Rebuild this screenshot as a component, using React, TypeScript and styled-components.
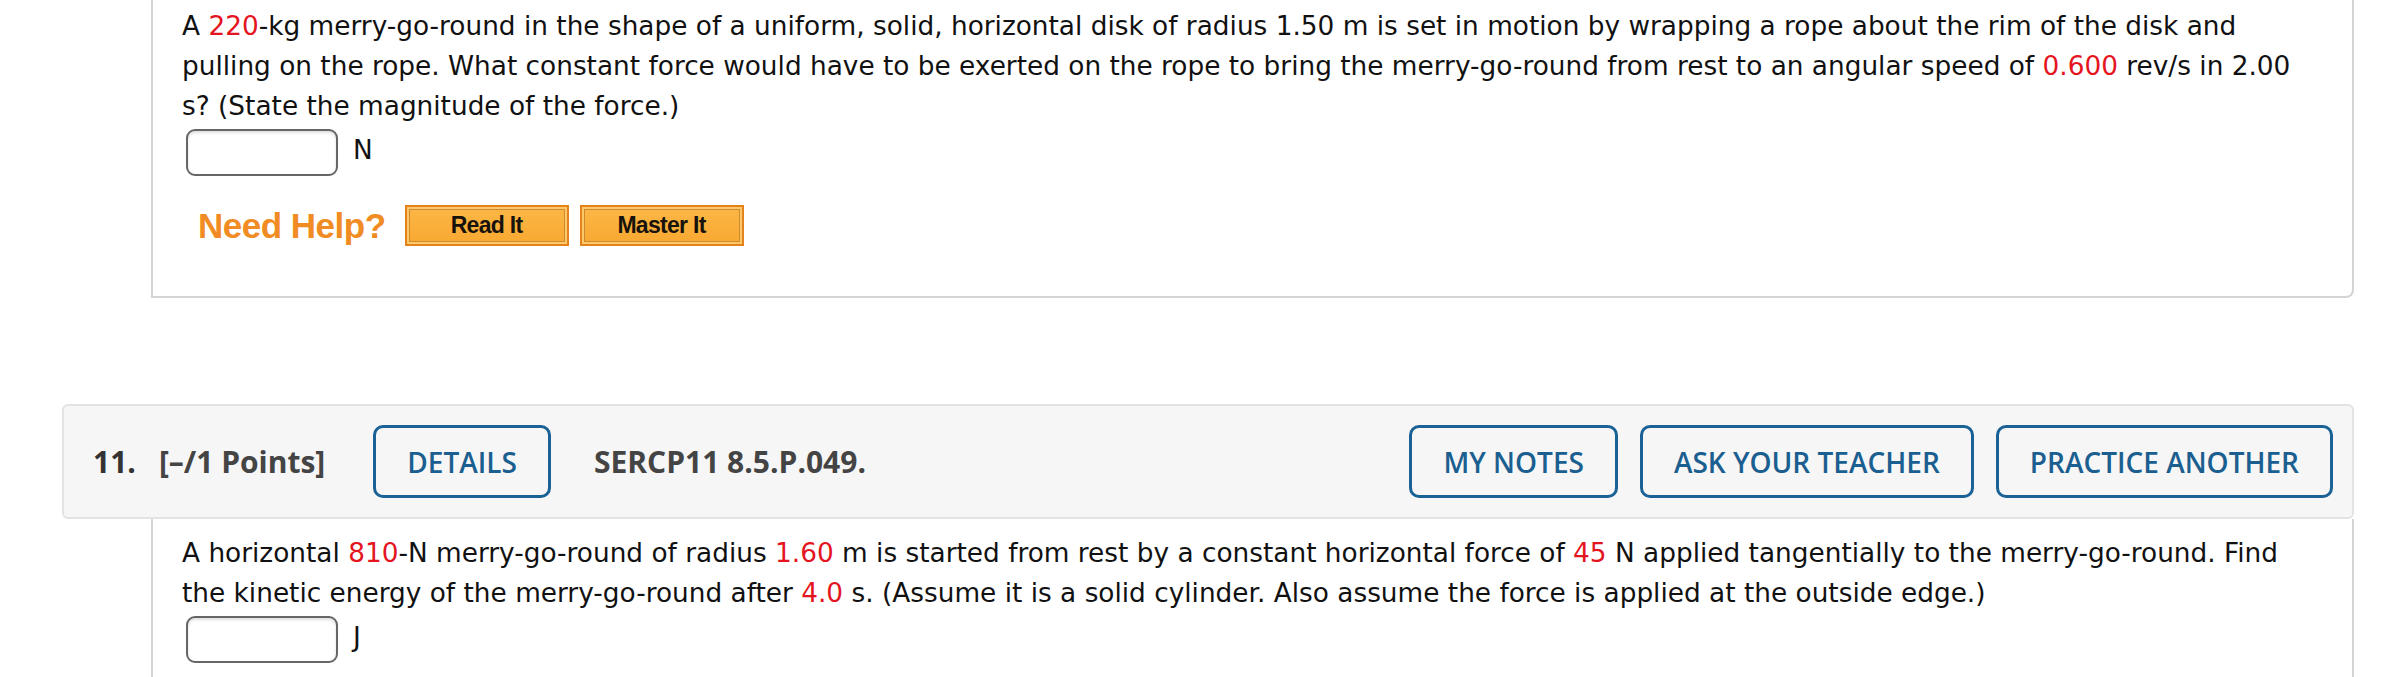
import React from "react";
import styled, { createGlobalStyle } from "styled-components";

const GlobalStyle = createGlobalStyle`
  html, body {
    margin: 0;
    padding: 0;
    background: #ffffff;
    overflow: hidden;
  }
  body {
    font-family: "DejaVu Sans", Verdana, sans-serif;
  }
`;

const Page = styled.main`
  padding: 0 34px 0 62px;
`;

const Question = styled.section`
  display: flex;
  flex-direction: column;

  & + & {
    margin-top: 106px;
  }
`;

const QuestionHeader = styled.header`
  display: flex;
  align-items: center;
  height: 115px;
  box-sizing: border-box;
  padding: 0 19px 0 29px;
  background: #f6f6f6;
  border: 2px solid #e3e3e3;
  border-radius: 6px;
  font-family: "Open Sans", sans-serif;
`;

const QuestionNumber = styled.span`
  font-size: 30px;
  font-weight: 700;
  color: #333333;
`;

const Points = styled.span`
  margin-left: 23px;
  font-size: 30px;
  font-weight: 700;
  color: #444444;
`;

const ProblemCode = styled.span`
  margin-left: 43px;
  font-size: 30px;
  font-weight: 700;
  color: #444444;
`;

const Actions = styled.div`
  display: flex;
  gap: 22px;
  margin-left: auto;
`;

const OutlineButton = styled.button<{ $offset?: number }>`
  height: 73px;
  box-sizing: border-box;
  margin-left: ${(p) => p.$offset ?? 0}px;
  padding: 0 31px;
  background: transparent;
  border: 3px solid #1a6196;
  border-radius: 10px;
  font-family: "Open Sans", sans-serif;
  font-size: 28px;
  font-weight: 600;
  color: #1b5e90;
  text-transform: uppercase;
  cursor: pointer;
`;

const QuestionBody = styled.div<{ $top: number }>`
  margin-left: 89px;
  padding: ${(p) => p.$top}px 42px 50px 29px;
  border: 2px solid #d4d4d4;
  border-top: none;
  border-bottom-right-radius: 8px;
  background: #ffffff;
`;

const Prompt = styled.p`
  margin: 0;
  font-size: 26.35px;
  line-height: 40px;
  color: #111111;
`;

const Value = styled.span`
  color: #e4151f;
`;

const AnswerRow = styled.div`
  display: flex;
  align-items: center;
  margin-top: 3px;
  padding-left: 4px;
`;

const AnswerInput = styled.input`
  width: 152px;
  height: 47px;
  box-sizing: border-box;
  border: 2px solid #666666;
  border-radius: 9px;
  box-shadow: inset 0 2px 3px rgba(0, 0, 0, 0.12);
  background: #ffffff;
`;

const Unit = styled.span`
  margin-left: 15px;
  margin-top: -6px;
  font-size: 26.35px;
  color: #111111;
`;

const HelpRow = styled.div`
  display: flex;
  align-items: center;
  margin-top: 29px;
  padding-left: 16px;
`;

const HelpLabel = styled.span`
  margin-right: 19px;
  font-family: "Liberation Sans", Arial, sans-serif;
  font-size: 35px;
  font-weight: 700;
  color: #f08c23;
  letter-spacing: -0.5px;
`;

const HelpButton = styled.button`
  width: 164px;
  height: 41px;
  box-sizing: border-box;
  margin-right: 11px;
  padding: 0;
  border: 2px solid #e4821c;
  background: linear-gradient(#fcb747, #f8a830);
  box-shadow: inset 0 0 0 2px #fdc86a, inset 0 0 0 3px #cf8a2f;
  font-family: "Liberation Sans", Arial, sans-serif;
  font-size: 23px;
  font-weight: 700;
  color: #17130c;
  letter-spacing: -0.7px;
  cursor: pointer;
`;

const App = () => (
  <>
    <GlobalStyle />
    <Page>
      <Question>
        <QuestionBody $top={6}>
          <Prompt>
            A <Value>220</Value>-kg merry-go-round in the shape of a uniform,
            solid, horizontal disk of radius 1.50 m is set in motion by wrapping
            a rope about the rim of the disk and pulling on the rope. What
            constant force would have to be exerted on the rope to bring the
            merry-go-round from rest to an angular speed of{" "}
            <Value>0.600</Value> rev/s in 2.00 s? (State the magnitude of the
            force.)
          </Prompt>
          <AnswerRow>
            <AnswerInput type="text" />
            <Unit>N</Unit>
          </AnswerRow>
          <HelpRow>
            <HelpLabel>Need Help?</HelpLabel>
            <HelpButton>Read It</HelpButton>
            <HelpButton>Master It</HelpButton>
          </HelpRow>
        </QuestionBody>
      </Question>

      <Question>
        <QuestionHeader>
          <QuestionNumber>11.</QuestionNumber>
          <Points>[–/1 Points]</Points>
          <OutlineButton $offset={48}>Details</OutlineButton>
          <ProblemCode>SERCP11 8.5.P.049.</ProblemCode>
          <Actions>
            <OutlineButton>My Notes</OutlineButton>
            <OutlineButton>Ask Your Teacher</OutlineButton>
            <OutlineButton>Practice Another</OutlineButton>
          </Actions>
        </QuestionHeader>
        <QuestionBody $top={14}>
          <Prompt>
            A horizontal <Value>810</Value>-N merry-go-round of radius{" "}
            <Value>1.60</Value> m is started from rest by a constant horizontal
            force of <Value>45</Value> N applied tangentially to the
            merry-go-round. Find the kinetic energy of the merry-go-round after{" "}
            <Value>4.0</Value> s. (Assume it is a solid cylinder. Also assume
            the force is applied at the outside edge.)
          </Prompt>
          <AnswerRow>
            <AnswerInput type="text" />
            <Unit>J</Unit>
          </AnswerRow>
          <HelpRow>
            <HelpLabel>Need Help?</HelpLabel>
            <HelpButton>Read It</HelpButton>
          </HelpRow>
        </QuestionBody>
      </Question>
    </Page>
  </>
);

export default App;
